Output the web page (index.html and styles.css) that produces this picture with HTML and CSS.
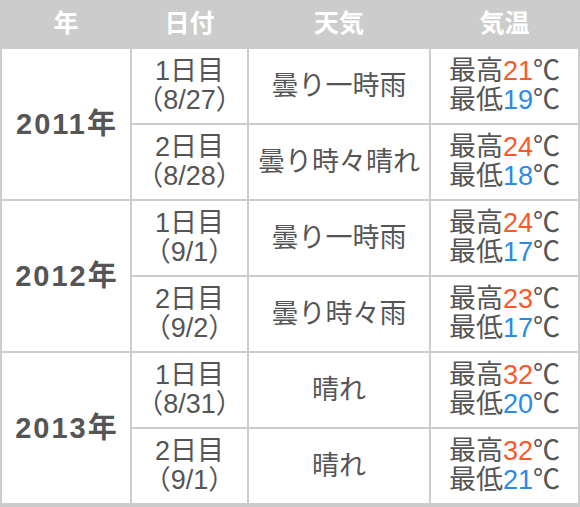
FILE: index.html
```html
<!DOCTYPE html>
<html lang="ja">
<head>
<meta charset="utf-8">
<link rel="stylesheet" href="styles.css">
</head>
<body>
<table class="weather">
  <colgroup>
    <col class="c-year"><col class="c-date"><col class="c-sky"><col class="c-temp">
  </colgroup>
  <thead>
    <tr><th>年</th><th>日付</th><th>天気</th><th>気温</th></tr>
  </thead>
  <tbody>
    <tr>
      <td class="year" rowspan="2">2011年</td>
      <td>1日目<br>（8/27）</td>
      <td>曇り一時雨</td>
      <td class="temp">最高<span class="hi">21</span>℃<br>最低<span class="lo">19</span>℃</td>
    </tr>
    <tr>
      <td>2日目<br>（8/28）</td>
      <td>曇り時々晴れ</td>
      <td class="temp">最高<span class="hi">24</span>℃<br>最低<span class="lo">18</span>℃</td>
    </tr>
    <tr>
      <td class="year" rowspan="2">2012年</td>
      <td>1日目<br>（9/1）</td>
      <td>曇り一時雨</td>
      <td class="temp">最高<span class="hi">24</span>℃<br>最低<span class="lo">17</span>℃</td>
    </tr>
    <tr>
      <td>2日目<br>（9/2）</td>
      <td>曇り時々雨</td>
      <td class="temp">最高<span class="hi">23</span>℃<br>最低<span class="lo">17</span>℃</td>
    </tr>
    <tr>
      <td class="year" rowspan="2">2013年</td>
      <td>1日目<br>（8/31）</td>
      <td>晴れ</td>
      <td class="temp">最高<span class="hi">32</span>℃<br>最低<span class="lo">20</span>℃</td>
    </tr>
    <tr>
      <td>2日目<br>（9/1）</td>
      <td>晴れ</td>
      <td class="temp">最高<span class="hi">32</span>℃<br>最低<span class="lo">21</span>℃</td>
    </tr>
  </tbody>
</table>
</body>
</html>
```

FILE: styles.css
```css
html, body {
  margin: 0;
  padding: 0;
  background: #cccccc;
}

.weather {
  border-collapse: collapse;
  table-layout: fixed;
  width: 578px;
  background: #ffffff;
  font-family: "Liberation Sans", "Noto Sans CJK JP", sans-serif;
  color: #555555;
  font-size: 27px;
  line-height: 29px;
  text-align: center;
}

.c-year { width: 130px; }
.c-date { width: 117px; }
.c-sky { width: 182px; }
.c-temp { width: 149px; }

.weather th {
  background: #cccccc;
  color: #ffffff;
  font-weight: bold;
  font-size: 25px;
  height: 47px;
  padding: 0;
  border: 2px solid #cccccc;
  border-top: 0;
  vertical-align: middle;
}

.weather td {
  border: 2px solid #cccccc;
  height: 74px;
  padding: 0;
  vertical-align: middle;
  white-space: nowrap;
}

.weather td.year {
  font-weight: bold;
  font-size: 29px;
  letter-spacing: 2px;
  text-indent: 2px;
}

.hi { color: #fa5a28; }
.lo { color: #2a8ae8; }
```
